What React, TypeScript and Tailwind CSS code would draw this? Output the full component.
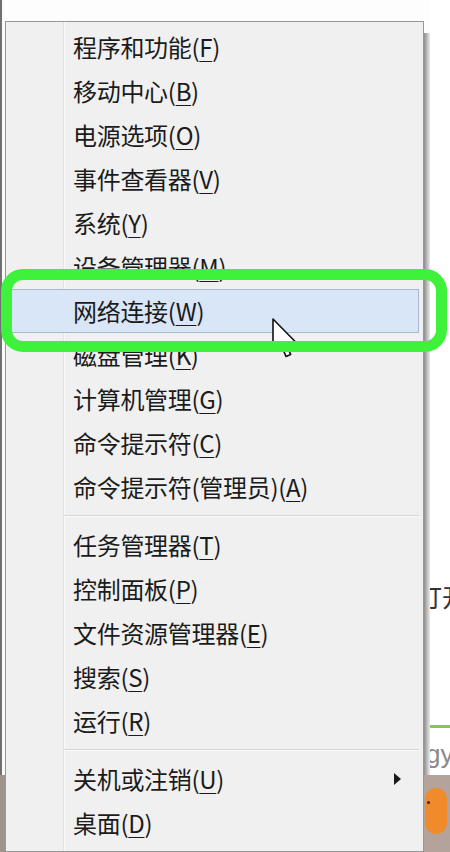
import React from "react";

type Item = { label: string; key: string; sep?: boolean; sub?: boolean; hot?: boolean };

const items: Item[] = [
  { label: "程序和功能", key: "F" },
  { label: "移动中心", key: "B" },
  { label: "电源选项", key: "O" },
  { label: "事件查看器", key: "V" },
  { label: "系统", key: "Y" },
  { label: "设备管理器", key: "M" },
  { label: "网络连接", key: "W", hot: true },
  { label: "磁盘管理", key: "K" },
  { label: "计算机管理", key: "G" },
  { label: "命令提示符", key: "C" },
  { label: "命令提示符(管理员)", key: "A", sep: true },
  { label: "任务管理器", key: "T" },
  { label: "控制面板", key: "P" },
  { label: "文件资源管理器", key: "E" },
  { label: "搜索", key: "S" },
  { label: "运行", key: "R", sep: true },
  { label: "关机或注销", key: "U", sub: true },
  { label: "桌面", key: "D" },
];

function Row({ it }: { it: Item }) {
  return (
    <div
      className={
        "h-[44px] flex items-center pl-[63px] pr-[16px] border " +
        (it.hot ? "bg-[#d8e6f7] border-[#a9b8cf]" : "border-transparent")
      }
    >
      <span className="flex-1 text-[24px] tracking-[-0.3px] text-[#1b1b1b] leading-none whitespace-nowrap">
        {it.label}(<span className="underline decoration-1 underline-offset-[4px]">{it.key}</span>)
      </span>
      {it.sub && (
        <span className="w-0 h-0 border-y-[6px] border-y-transparent border-l-[7px] border-l-[#1b1b1b] mr-[1px]" />
      )}
    </div>
  );
}

export default function App() {
  return (
    <div
      className="relative w-[450px] h-[852px] overflow-hidden bg-[#fdfdfd] flex"
      style={{ fontFamily: '"Noto Sans CJK SC", "Noto Sans", sans-serif' }}
    >
      {/* left edge of background window */}
      <div className="w-[5px] flex flex-col shrink-0">
        <div className="h-[775px] flex">
          <div className="w-[2px] bg-[#707070]" />
          <div className="flex-1 bg-[#fafafa]" />
        </div>
        <div className="flex-1 bg-[#9d948c]" />
      </div>

      {/* menu */}
      <div className="mt-[21px] w-[419px] h-[831px] shrink-0 relative bg-[#f0f0f0] border border-[#979797] pt-[3px] pl-[3px] pr-[4px]">
        <div className="absolute left-[57px] top-0 bottom-0 w-[1px] bg-[#e2e2e2]" />
        <div className="absolute left-[58px] top-0 bottom-0 w-[1px] bg-[#fafafa]" />
        <div className="relative flex flex-col">
          {items.map((it, i) => (
            <React.Fragment key={i}>
              <Row it={it} />
              {it.sep && (
                <div className="h-[14px] flex flex-col justify-center pl-[55px]">
                  <div className="h-[1px] bg-[#d5d5d5]" />
                  <div className="h-[1px] bg-[#fbfbfb]" />
                </div>
              )}
            </React.Fragment>
          ))}
        </div>
      </div>

      {/* right background window part */}
      <div className="flex-1 flex flex-col">
        <div className="h-[775px] flex">
          <div className="w-[6px] flex flex-col">
            <div className="h-[33px]" />
            <div className="flex-1 bg-gradient-to-r from-[#8e8e8e] to-[#ececec]" />
          </div>
          <div className="flex-1 flex flex-col bg-white overflow-hidden">
            <div className="h-[572px]" />
            <div className="h-[48px] -ml-[13px] text-[25px] leading-[48px] text-[#333] whitespace-nowrap">订开</div>
            <div className="h-[105px]" />
            <div className="h-[3px] bg-[#8dc63f]" />
            <div className="h-[12px]" />
            <div className="-ml-[4px] text-[26px] leading-[28px] text-[#8a8a8a] whitespace-nowrap" style={{ fontFamily: '"Liberation Sans", sans-serif' }}>gy</div>
          </div>
          <div className="w-[3px] bg-[#e4e4e4]" />
        </div>
        <div className="flex-1 bg-[#b3a39a] flex flex-col pt-[13px] pl-[1px]">
          <div className="relative w-[22px] h-[46px] rounded-full bg-[#f08b2c]">
            <div className="absolute left-[2px] top-[13px] w-[3px] h-[3px] rounded-full bg-[#3a2a20]" />
          </div>
        </div>
      </div>

      {/* mouse cursor */}
      <svg className="absolute left-[272px] top-[318px]" width="26" height="42" viewBox="0 0 13 21">
        <path d="M0.5 0.5 L0.5 16.5 L4.3 12.8 L7 19.2 L9.3 18.2 L6.7 12 L11.8 12 Z" fill="#fff" stroke="#111" strokeWidth="0.8" strokeLinejoin="round" />
      </svg>

      {/* green highlight ring */}
      <div className="absolute left-[1px] top-[269px] w-[446px] h-[83px] border-[11px] border-[#3ef23b] rounded-[22px]" />
    </div>
  );
}
